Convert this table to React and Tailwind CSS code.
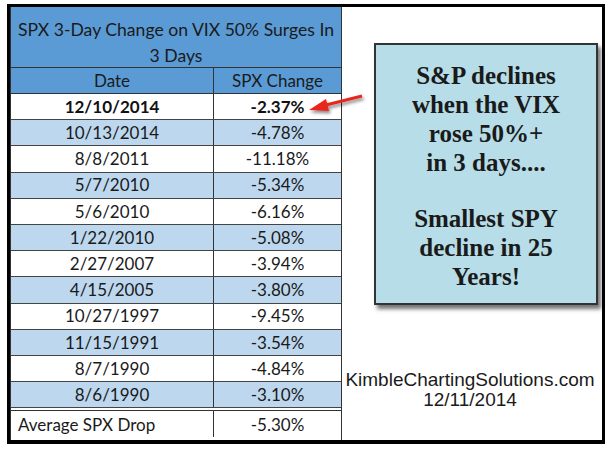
import React from 'react';

const rows = [
  ['12/10/2014', '-2.37%'],
  ['10/13/2014', '-4.78%'],
  ['8/8/2011', '-11.18%'],
  ['5/7/2010', '-5.34%'],
  ['5/6/2010', '-6.16%'],
  ['1/22/2010', '-5.08%'],
  ['2/27/2007', '-3.94%'],
  ['4/15/2005', '-3.80%'],
  ['10/27/1997', '-9.45%'],
  ['11/15/1991', '-3.54%'],
  ['8/7/1990', '-4.84%'],
  ['8/6/1990', '-3.10%'],
];

const cell = "font-['Lato','Liberation_Sans',sans-serif] text-[17px] text-[#1a1a1a]";

export default function App() {
  return (
    <div className="w-[614px] h-[450px] bg-white pt-[4px] pl-[7px]">
      <div className="relative w-[598px] h-[440px] border-[3px] border-b-[4px] border-black flex">
        {/* table */}
        <div className="w-[332px] flex flex-col border-r border-l border-[#333] bg-white">
          <div className={`h-[61px] bg-[#5b9bd5] flex flex-col items-center pt-[10px] leading-[26px] ${cell} border-b border-[#333]`}>
            <span className="text-[17.6px]">SPX 3-Day Change on VIX 50% Surges In</span>
            <span className="text-[17.6px]">3 Days</span>
          </div>
          <div className={`h-[26px] flex bg-[#5b9bd5] border-b border-[#333] ${cell}`}>
            <div className="w-[203px] border-r border-[#333] flex items-center justify-center">Date</div>
            <div className="flex-1 flex items-center justify-center">SPX Change</div>
          </div>
          {rows.map((r, i) => (
            <div
              key={r[0]}
              className={`h-[26.2px] flex border-b border-[#444] ${cell} ${i % 2 === 1 ? 'bg-[#bdd7ee]' : 'bg-white'} ${i === 0 ? 'font-bold text-[#111]' : ''}`}
            >
              <div className="w-[203px] border-r border-[#333] flex items-center justify-center">{r[0]}</div>
              <div className="flex-1 flex items-center justify-center">{r[1]}</div>
            </div>
          ))}
          <div className="h-[3px] border-b border-[#333]" />
          <div className={`h-[26px] flex ${cell}`}>
            <div className="w-[203px] border-r border-[#333] flex items-center pl-[7px]">Average SPX Drop</div>
            <div className="flex-1 flex items-center justify-center">-5.30%</div>
          </div>
        </div>

        {/* right panel */}
        <div className="flex-1 flex flex-col pt-[36px] pl-[32px] pr-[4px]">
          <div className="w-[224px] h-[262px] bg-[#b7dde8] border-2 border-[#333] shadow-[3px_4px_4px_rgba(0,0,0,0.55)] flex flex-col items-center pt-[16px] font-['Liberation_Serif',serif] font-bold text-[25px] leading-[29px] text-[#1a1a1a] text-center">
            <span>S&amp;P declines</span>
            <span>when the VIX</span>
            <span>rose 50%+</span>
            <span>in 3 days....</span>
            <span className="h-[27px]" />
            <span>Smallest SPY</span>
            <span>decline in 25</span>
            <span>Years!</span>
          </div>
          <div className="mt-[65px] flex flex-col items-center font-['Liberation_Sans',sans-serif] text-[19px] leading-[20px] text-[#1a1a1a] -ml-[32px]">
            <span>KimbleChartingSolutions.com</span>
            <span>12/11/2014</span>
          </div>
        </div>

        {/* red arrow */}
        <svg className="absolute left-[-10px] top-[-7px]" width="614" height="450" viewBox="0 0 614 450">
          <defs>
            <filter id="sh" x="-20%" y="-50%" width="140%" height="200%">
              <feDropShadow dx="1.5" dy="2.5" stdDeviation="1.5" floodColor="#000" floodOpacity="0.45" />
            </filter>
          </defs>
          <g filter="url(#sh)">
            <line x1="322" y1="106" x2="362" y2="96" stroke="#e8261e" strokeWidth="3" />
            <polygon points="309,110 326,99 329,111" fill="#e8261e" />
          </g>
        </svg>
      </div>
    </div>
  );
}
